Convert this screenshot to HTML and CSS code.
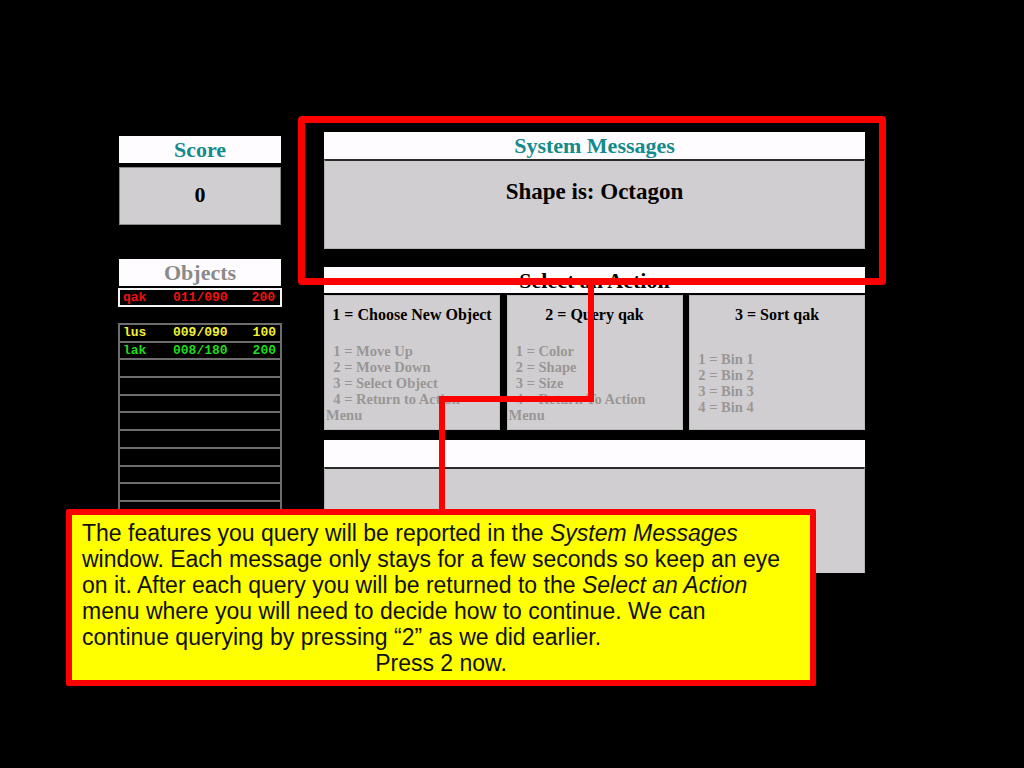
FILE: index.html
```html
<!DOCTYPE html>
<html>
<head>
<meta charset="utf-8">
<title>Sorting task</title>
<link rel="stylesheet" href="styles.css">
</head>
<body>
<div class="app">
  <div class="side">
    <div class="head score-head">Score</div>
    <div class="score-box">0</div>
    <div class="head obj-head">Objects</div>
    <div class="obj-row sel red"><span class="nm">qak</span><span>011/090</span><span class="rt">200</span></div>
    <div class="list">
      <div class="obj-row yellow"><span class="nm">lus</span><span>009/090</span><span class="rt">100</span></div>
      <div class="obj-row green"><span class="nm">lak</span><span>008/180</span><span class="rt">200</span></div>
      <div class="obj-row"></div>
      <div class="obj-row"></div>
      <div class="obj-row"></div>
      <div class="obj-row"></div>
      <div class="obj-row"></div>
      <div class="obj-row"></div>
      <div class="obj-row"></div>
      <div class="obj-row"></div>
      <div class="obj-row"></div>
      <div class="obj-row"></div>
    </div>
  </div>
  <div class="main">
    <div class="head wide">System Messages</div>
    <div class="msg-body">Shape is: Octagon</div>
    <div class="head wide plain act-head">Select an Action</div>
    <div class="cols">
      <div class="col">
        <div class="col-title">1 = Choose New Object</div>
        <div class="items"><div class="txt">  1 = Move Up
  2 = Move Down
  3 = Select Object
  4 = Return to Action
Menu</div></div>
      </div>
      <div class="col">
        <div class="col-title">2 = Query qak</div>
        <div class="items"><div class="txt">  1 = Color
  2 = Shape
  3 = Size
  4 = Return To Action
Menu</div></div>
      </div>
      <div class="col">
        <div class="col-title">3 = Sort qak</div>
        <div class="items"><div class="txt">  1 = Bin 1
  2 = Bin 2
  3 = Bin 3
  4 = Bin 4</div></div>
      </div>
    </div>
    <div class="head wide bottom-head"></div>
    <div class="bottom-body"></div>
  </div>
</div>

<div class="highlight"></div>
<svg class="connector" width="1024" height="768" viewBox="0 0 1024 768">
  <polyline points="591,284 591,399 442,399 442,512" fill="none" stroke="#ff0000" stroke-width="6"/>
</svg>
<div class="tip">The features you query will be reported in the <i>System Messages</i><br>window. Each message only stays for a few seconds so keep an eye<br>on it. After each query you will be returned to the <i>Select an Action</i><br>menu where you will need to decide how to continue. We can<br>continue querying by pressing “2” as we did earlier.<div class="center">Press 2 now.</div></div>
</body>
</html>
```
FILE: styles.css
```css
html, body {
  margin: 0;
  padding: 0;
  background: #000;
  width: 1024px;
  height: 768px;
  overflow: hidden;
}
body {
  position: relative;
  font-family: "Liberation Serif", "Times New Roman", serif;
}
.app {
  display: flex;
  align-items: flex-start;
  padding: 132px 0 0 118px;
  gap: 42px;
}
.side {
  width: 164px;
  margin-top: 4px;
  display: flex;
  flex-direction: column;
}
.head {
  background: #fefcff;
  height: 27px;
  line-height: 27px;
  text-align: center;
  font-weight: bold;
  font-size: 22px;
  color: #138b8b;
  margin: 0 1px;
}
.score-box {
  margin: 4px 1px 0;
  height: 58px;
  box-sizing: border-box;
  background: #d1ced1;
  border: 1px solid #8a8a8a;
  text-align: center;
  font-weight: bold;
  font-size: 22px;
  line-height: 54px;
  color: #000;
}
.obj-head {
  margin-top: 34px;
  color: #8a8a8a;
}
.obj-row {
  display: flex;
  align-items: center;
  box-sizing: border-box;
  font-family: "Liberation Mono", "DejaVu Sans Mono", monospace;
  font-weight: bold;
  font-size: 13px;
  padding: 0 5px 0 3px;
}
.obj-row .nm { width: 50px; }
.obj-row .rt { margin-left: auto; }
.sel {
  margin-top: 2px;
  height: 19px;
  border: 2px solid #f4f4f4;
  padding-left: 3px;
}
.red { color: #f21010; }
.yellow { color: #f2f236; }
.green { color: #1fdc1f; }
.list {
  margin-top: 16px;
  border-left: 2px solid #6e6e6e;
  border-right: 2px solid #6e6e6e;
  display: flex;
  flex-direction: column;
}
.list .obj-row {
  height: 17.7px;
  border-top: 2px solid #6e6e6e;
  padding-left: 3px;
  padding-right: 4px;
}
.main {
  width: 541px;
  display: flex;
  flex-direction: column;
}
.wide { margin: 0; }
.msg-body {
  height: 90px;
  box-sizing: border-box;
  border-top: 2px solid #2a2a2a;
  background: #d1ced1;
  border-left: 1px solid #b5b5b5;
  border-right: 1px solid #b5b5b5;
  border-bottom: 1px solid #b5b5b5;
  text-align: center;
  font-weight: bold;
  font-size: 23px;
  padding-top: 18px;
  color: #000;
}
.act-head {
  margin-top: 18px;
  height: 26px;
  line-height: 28px;
  color: #000;
}
.cols {
  margin-top: 2px;
  display: grid;
  grid-template-columns: 176px 176px 176px;
  column-gap: 6.5px;
  height: 135px;
}
.col {
  background: #d1ced1;
  border: 1px solid #bdbdbd;
  display: flex;
  flex-direction: column;
  padding-top: 10px;
  box-sizing: border-box;
}
.col-title {
  text-align: center;
  font-weight: bold;
  font-size: 16px;
  line-height: 18px;
  color: #000;
}
.items {
  flex: 1;
  margin-top: 13px;
  display: flex;
  flex-direction: column;
  justify-content: center;
}
.txt {
  white-space: pre;
  font-weight: bold;
  font-size: 14.5px;
  line-height: 16px;
  color: #9a9696;
  padding-left: 1px;
}
.bottom-head {
  margin-top: 10px;
  height: 27px;
}
.bottom-body {
  height: 106px;
  box-sizing: border-box;
  border-top: 2px solid #2a2a2a;
  background: #d1ced1;
  border-left: 1px solid #b5b5b5;
  border-right: 1px solid #b5b5b5;
}
.highlight {
  position: absolute;
  left: 298px;
  top: 116px;
  width: 588px;
  height: 169px;
  box-sizing: border-box;
  border: 7px solid #ff0000;
  border-radius: 4px;
}
.connector {
  position: absolute;
  left: 0;
  top: 0;
}
.tip {
  position: absolute;
  left: 66px;
  top: 509px;
  width: 750px;
  height: 177px;
  box-sizing: border-box;
  border: 6px solid #ff0000;
  border-radius: 2px;
  background: #ffff00;
  padding: 5px 6px 0 10px;
  font-family: "Liberation Sans", Arial, sans-serif;
  font-size: 23px;
  line-height: 26px;
  color: #111;
  white-space: nowrap;
}
.tip .center {
  text-align: center;
  margin-left: -4px;
}
```
